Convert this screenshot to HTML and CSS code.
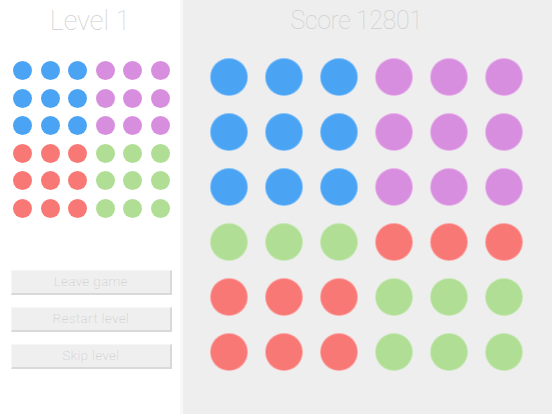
FILE: index.html
```html
<!DOCTYPE html>
<html>
<head>
<meta charset="utf-8">
<link rel="stylesheet" href="styles.css">
</head>
<body>
<div class="app">
  <aside class="side">
    <h1 class="title">Level 1</h1>
    <div class="mini">
      <span class="dot b"></span><span class="dot b"></span><span class="dot b"></span><span class="dot p"></span><span class="dot p"></span><span class="dot p"></span>
      <span class="dot b"></span><span class="dot b"></span><span class="dot b"></span><span class="dot p"></span><span class="dot p"></span><span class="dot p"></span>
      <span class="dot b"></span><span class="dot b"></span><span class="dot b"></span><span class="dot p"></span><span class="dot p"></span><span class="dot p"></span>
      <span class="dot r"></span><span class="dot r"></span><span class="dot r"></span><span class="dot g"></span><span class="dot g"></span><span class="dot g"></span>
      <span class="dot r"></span><span class="dot r"></span><span class="dot r"></span><span class="dot g"></span><span class="dot g"></span><span class="dot g"></span>
      <span class="dot r"></span><span class="dot r"></span><span class="dot r"></span><span class="dot g"></span><span class="dot g"></span><span class="dot g"></span>
    </div>
    <div class="actions">
      <button class="btn">Leave game</button>
      <button class="btn">Restart level</button>
      <button class="btn">Skip level</button>
    </div>
  </aside>
  <main class="board">
    <h1 class="title score">Score 12801</h1>
    <div class="grid">
      <span class="dot b"></span><span class="dot b"></span><span class="dot b"></span><span class="dot p"></span><span class="dot p"></span><span class="dot p"></span>
      <span class="dot b"></span><span class="dot b"></span><span class="dot b"></span><span class="dot p"></span><span class="dot p"></span><span class="dot p"></span>
      <span class="dot b"></span><span class="dot b"></span><span class="dot b"></span><span class="dot p"></span><span class="dot p"></span><span class="dot p"></span>
      <span class="dot g"></span><span class="dot g"></span><span class="dot g"></span><span class="dot r"></span><span class="dot r"></span><span class="dot r"></span>
      <span class="dot r"></span><span class="dot r"></span><span class="dot r"></span><span class="dot g"></span><span class="dot g"></span><span class="dot g"></span>
      <span class="dot r"></span><span class="dot r"></span><span class="dot r"></span><span class="dot g"></span><span class="dot g"></span><span class="dot g"></span>
    </div>
  </main>
</div>
</body>
</html>
```

FILE: styles.css
```css
html, body {
  margin: 0;
  padding: 0;
  width: 552px;
  height: 414px;
  overflow: hidden;
  font-family: "Roboto", "Lato", "Liberation Sans", sans-serif;
}

.app {
  display: flex;
  width: 552px;
  height: 414px;
}

.side {
  width: 180px;
  background: #ffffff;
  border-right: 3px solid #f8f8f8;
  display: flex;
  flex-direction: column;
}

.board {
  flex: 1;
  background: #eeeeee;
  display: flex;
  flex-direction: column;
}

.title {
  margin: 0;
  height: 42px;
  line-height: 42px;
  font-size: 27px;
  font-weight: 100;
  color: #cfcfcf;
  text-align: center;
  letter-spacing: 0;
}

.score {
  color: #d0d0d0;
  font-size: 25px;
  letter-spacing: -0.4px;
  padding-right: 22px;
  height: 40px;
  line-height: 42px;
}

.mini {
  display: grid;
  grid-template-columns: repeat(6, 19px);
  grid-auto-rows: 19px;
  column-gap: 8.5px;
  row-gap: 8.5px;
  padding: 19px 0 0 13px;
}

.mini .dot {
  width: 19px;
  height: 19px;
}

.grid {
  display: grid;
  grid-template-columns: repeat(6, 36px);
  grid-auto-rows: 36px;
  gap: 19px;
  padding: 19px 0 0 28px;
}

.dot {
  display: block;
  width: 36px;
  height: 36px;
  border-radius: 50%;
}

.b { background: #4ba3f4; box-shadow: 0 0 0 1px #86c3f8; }
.p { background: #d88ede; box-shadow: 0 0 0 1px #e7b6ea; }
.r { background: #f87876; box-shadow: 0 0 0 1px #fbaaa8; }
.g { background: #b0de95; box-shadow: 0 0 0 1px #c9e8b7; }

.mini .b, .mini .p, .mini .r, .mini .g { box-shadow: none; }

.actions {
  display: flex;
  flex-direction: column;
  gap: 12px;
  padding: 52px 0 0 11px;
}

.btn {
  width: 161px;
  height: 25px;
  padding: 0;
  margin: 0;
  background: #efefef;
  border: none;
  border-right: 2px solid #d9d9d9;
  border-bottom: 2px solid #d9d9d9;
  border-top: 1px solid #f6f6f6;
  border-left: 1px solid #f6f6f6;
  font-family: "Roboto", "Lato", "Liberation Sans", sans-serif;
  font-weight: 100;
  font-size: 13px;
  color: #c4c4c4;
  text-align: center;
  letter-spacing: 0.6px;
}
```
